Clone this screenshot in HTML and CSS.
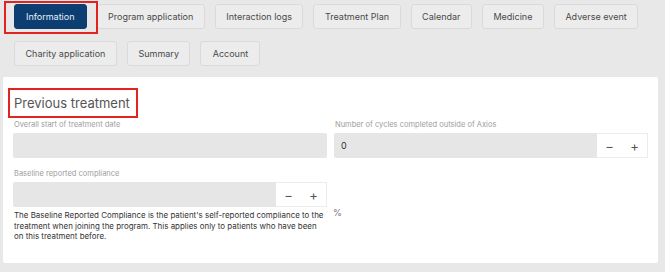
FILE: index.html
```html
<!DOCTYPE html>
<html lang="en">
<head>
    <meta charset="UTF-8">
    <title>Patient - Information</title>
    <link rel="stylesheet" href="styles.css">
</head>
<body>
    <nav class="tabs">
        <div class="tab-row">
            <button class="tab active marked">Information</button>
            <button class="tab">Program application</button>
            <button class="tab">Interaction logs</button>
            <button class="tab">Treatment Plan</button>
            <button class="tab">Calendar</button>
            <button class="tab">Medicine</button>
            <button class="tab">Adverse event</button>
        </div>
        <div class="tab-row">
            <button class="tab">Charity application</button>
            <button class="tab">Summary</button>
            <button class="tab">Account</button>
        </div>
    </nav>

    <section class="card">
        <h2 class="card-title"><span class="marked">Previous treatment</span></h2>

        <div class="form-grid">
            <div class="field">
                <label class="field-label">Overall start of treatment date</label>
                <div class="input"></div>
            </div>
            <div class="field">
                <label class="field-label">Number of cycles completed outside of Axios</label>
                <div class="stepper">
                    <div class="stepper-value">0</div>
                    <div class="stepper-buttons">
                        <span>&minus;</span>
                        <span>+</span>
                    </div>
                </div>
            </div>
            <div class="field">
                <label class="field-label">Baseline reported compliance</label>
                <div class="with-unit">
                    <div class="stepper-block">
                        <div class="stepper">
                            <div class="stepper-value"></div>
                            <div class="stepper-buttons">
                                <span>&minus;</span>
                                <span>+</span>
                            </div>
                        </div>
                        <p class="help">The Baseline Reported Compliance is the patient's self-reported compliance to the treatment when joining the program. This applies only to patients who have been on this treatment before.</p>
                    </div>
                    <span class="unit">%</span>
                </div>
            </div>
        </div>
    </section>
</body>
</html>
```

FILE: styles.css
```css
body {
    margin: 0;
    background: #e8e8e8;
    font-family: Inter, "Noto Sans", sans-serif;
    color: #444;
}

/* tabs */
.tabs {
    display: flex;
    flex-direction: column;
    gap: 12px;
    padding: 4px 0 0 14px;
}

.tab-row {
    display: flex;
    gap: 10px;
}

.tab {
    height: 25px;
    min-width: 60px;
    padding: 0 10.5px;
    border: 1px solid #dadada;
    border-radius: 3px;
    background: #ececec;
    font-family: inherit;
    font-size: 9px;
    color: #4a4a4a;
}

.tab.active {
    background: #0c3e72;
    border-color: #0c3e72;
    color: #e8eef6;
    padding: 0 11px;
}

/* red annotation boxes */
.marked {
    position: relative;
}

.tab.marked::after {
    content: "";
    position: absolute;
    top: -4px;
    left: -11px;
    right: -12px;
    bottom: -6px;
    border: 2px solid #e3231f;
}

.card-title .marked::after {
    content: "";
    position: absolute;
    top: -7px;
    left: -6px;
    right: -8px;
    bottom: -7px;
    border: 2px solid #e3231f;
}

/* card */
.card {
    margin: 11px 7px 0 3px;
    height: 186px;
    box-sizing: border-box;
    padding: 17px 10px 0 10px;
    background: #fff;
    border-radius: 2px;
}

.card-title {
    margin: 0 0 0 1px;
    font-size: 13px;
    font-weight: 400;
    line-height: 18px;
    color: #555;
}

.form-grid {
    display: grid;
    grid-template-columns: repeat(2, minmax(0, 1fr));
    gap: 12px 7px;
    margin-top: 9px;
}

.field-label {
    display: block;
    margin: 0 0 4px 1px;
    font-size: 7.5px;
    line-height: 8px;
    color: #9d9d9d;
}

.input {
    height: 25px;
    background: #e6e6e6;
    border-radius: 2px;
}

.stepper {
    display: flex;
    height: 25px;
}

.stepper-value {
    flex: 1;
    background: #e6e6e6;
    border-radius: 2px 0 0 2px;
    padding-left: 7px;
    font-size: 9px;
    line-height: 25px;
    color: #333;
}

.stepper-buttons {
    display: flex;
    align-items: center;
    justify-content: space-around;
    width: 51px;
    border: 1px solid #ececec;
    border-left: none;
    box-sizing: border-box;
    font-size: 13px;
    color: #555;
}

.with-unit {
    display: flex;
    align-items: center;
    gap: 6px;
}

.stepper-block {
    flex: 0 0 100%;
}

.help {
    margin: 3px 0 0 1px;
    font-size: 7.95px;
    line-height: 10.5px;
    color: #333;
}

.unit {
    font-size: 9px;
    color: #777;
    margin-top: 2px;
}
```
